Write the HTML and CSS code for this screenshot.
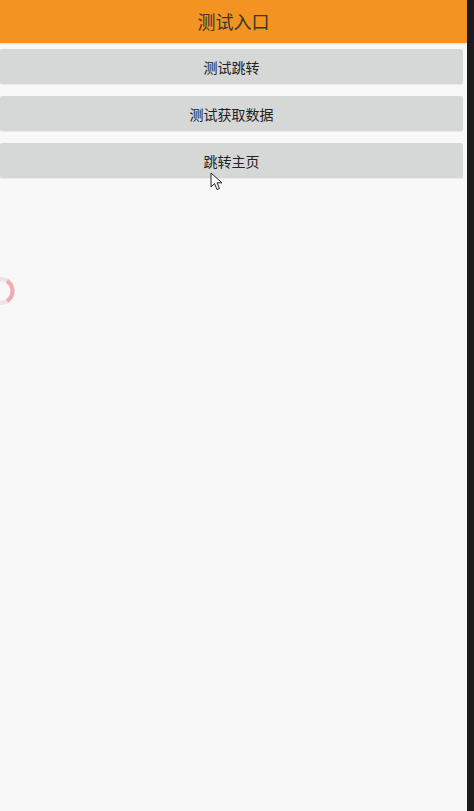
FILE: index.html
```html
<!doctype html>
<html lang="zh">
<head>
    <meta charset="utf-8">
    <title>测试入口</title>
    <link rel="stylesheet" href="styles.css">
</head>
<body>
<div class="screen">
    <div class="app">
        <header class="toolbar">测试入口</header>
        <div class="actions">
            <button class="btn">测试跳转</button>
            <button class="btn">测试获取数据</button>
            <button class="btn">跳转主页</button>
        </div>

        <svg class="spinner" width="34" height="34" viewBox="0 0 34 34" xmlns="http://www.w3.org/2000/svg">
            <circle cx="5" cy="17" r="12" fill="none" stroke="#efe2e2" stroke-width="4"></circle>
            <path d="M11 7 A12 12 0 0 1 11 27" fill="none" stroke="#f3959a" stroke-width="4" opacity="0.7"></path>
        </svg>

        <svg class="cursor" width="14" height="20" viewBox="0 0 14 20" xmlns="http://www.w3.org/2000/svg">
            <path d="M1 1 L1 15 L4.5 11.5 L7 17.5 L9.5 16.5 L7 10.8 L12 10.8 Z" fill="#fff" stroke="#222" stroke-width="1"
                  stroke-linejoin="round"></path>
        </svg>
    </div>
    <div class="edge"></div>
</div>
</body>
</html>
```

FILE: styles.css
```css
html, body {
    margin: 0;
    height: 100%;
}

body {
    font-family: "Noto Sans CJK SC", "Noto Sans", sans-serif;
    background-color: #1b1b1f;
}

.screen {
    display: flex;
    height: 811px;
}

.app {
    position: relative;
    width: 467px;
    background-color: #f8f8f8;
    overflow: hidden;
}

.edge {
    flex: 1;
    background-color: #1b1b1f;
}

.toolbar {
    height: 43px;
    line-height: 42px;
    background-color: #f29322;
    color: #3a3630;
    font-size: 18px;
    text-align: center;
    box-shadow: 0 1px 2px rgba(0, 0, 0, 0.12);
}

.actions {
    display: flex;
    flex-direction: column;
    gap: 12px;
    padding: 6px 4px 0 0;
}

.btn {
    height: 35px;
    border: none;
    border-radius: 2px;
    background-color: #d6d7d7;
    color: #222;
    font-family: inherit;
    font-size: 14px;
    padding: 0;
    box-shadow: 0 1px 1px rgba(0, 0, 0, 0.06);
}

.spinner {
    position: absolute;
    left: -4px;
    top: 274px;
}

.cursor {
    position: absolute;
    left: 210px;
    top: 172px;
}
```
